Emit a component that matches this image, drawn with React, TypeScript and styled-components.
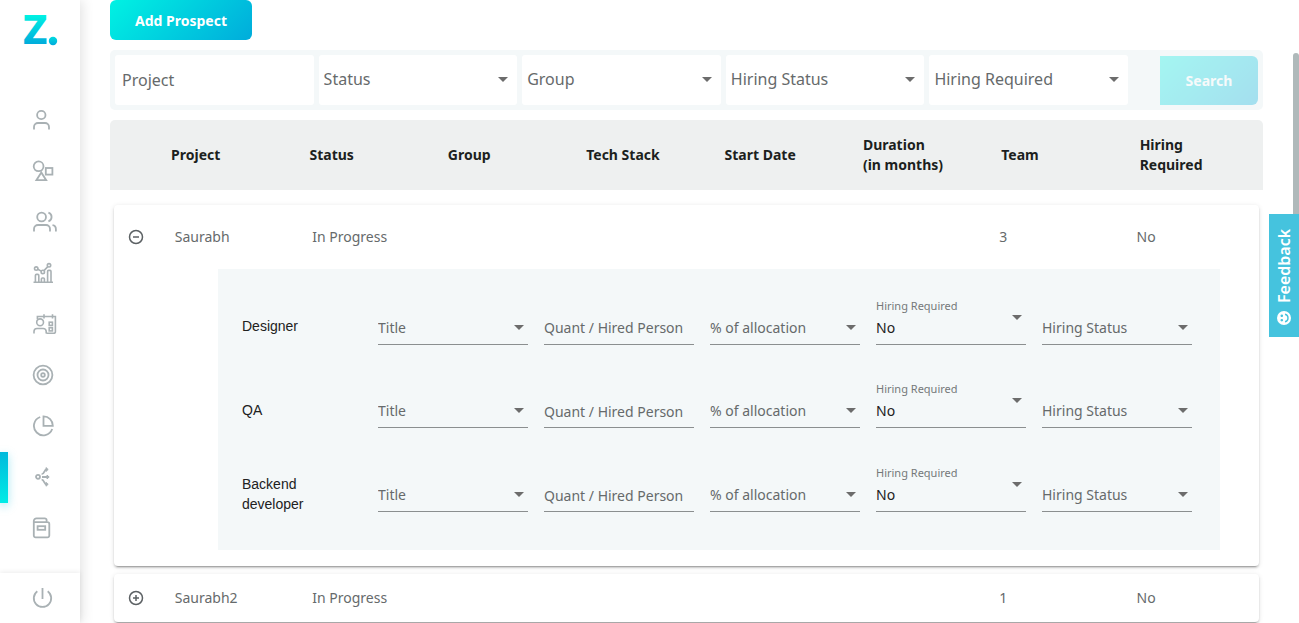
import React from "react";
import styled, { createGlobalStyle, css } from "styled-components";

const GlobalStyle = createGlobalStyle`
  *, *::before, *::after { box-sizing: border-box; }
  body {
    margin: 0;
    background: #fff;
    color: #212121;
    font-family: "Noto Sans", sans-serif;
    font-size: 14px;
    line-height: 20px;
  }
  button, input, select { font: inherit; }
`;

/* ---------- shell ---------- */

const Shell = styled.div`
  display: flex;
  height: 100vh;
  overflow: hidden;
`;

const Main = styled.main`
  flex: 1;
  min-width: 0;
  padding: 0 36px 0 30px;
`;

/* ---------- sidebar ---------- */

const Sidebar = styled.aside`
  display: flex;
  flex-direction: column;
  flex: 0 0 80px;
  background: #fff;
  box-shadow: 2px 0 12px rgba(0, 0, 0, 0.12);
`;

const LogoLink = styled.a`
  display: block;
  flex: 0 0 95px;
  padding-left: 22px;
`;

const NavList = styled.ul`
  list-style: none;
  margin: 0;
  padding: 0;
`;

const NavItem = styled.li<{ $active?: boolean }>`
  display: flex;
  height: 51px;

  &::before {
    content: "";
    width: 8px;
    ${(p) =>
      p.$active &&
      css`
        background: linear-gradient(#00b9dc, #00ece6);
        box-shadow: 0 3px 10px rgba(0, 190, 222, 0.35);
      `}
  }
`;

const NavLink = styled.a`
  display: flex;
  flex: 1;
  align-items: center;
  padding: 0 0 2px 24px;
  color: #a9b1b4;
`;

const SidebarFooter = styled.div`
  display: flex;
  margin-top: auto;
  height: 50px;
  box-shadow: 0 -1px 5px rgba(0, 0, 0, 0.08);
`;

const PowerButton = styled.button`
  display: flex;
  flex: 1;
  align-items: center;
  padding: 0 0 0 32px;
  border: 0;
  background: none;
  color: #a9b1b4;
`;

/* ---------- buttons ---------- */

const GradientButton = styled.button`
  border: 0;
  padding: 0 25px;
  border-radius: 6px;
  background: linear-gradient(135deg, #00f2e3, #00acdb);
  color: #fff;
  font-weight: 700;
`;

const AddButton = styled(GradientButton)`
  display: block;
  height: 40px;
  padding-top: 2px;
`;

const SearchButton = styled(GradientButton)`
  width: 98px;
  height: 49px;
  border-radius: 0 6px 6px 0;
  opacity: 0.32;
`;

/* ---------- filter bar ---------- */

const FilterBar = styled.form`
  display: flex;
  align-items: flex-end;
  gap: 32px;
  margin-top: 10px;
  padding: 5px;
  border-radius: 5px;
  background: #f4f8f9;
`;

const FilterFields = styled.div`
  display: grid;
  grid-template-columns: repeat(5, minmax(0, 1fr));
  gap: 5px;
  flex: 1;
`;

const FilterBox = styled.label`
  display: grid;
  align-items: center;
  height: 50px;
  border-radius: 3px;
  background: #fff;
  font-size: 16px;
`;

const controlReset = css`
  grid-area: 1 / 1;
  width: 100%;
  min-width: 0;
  border: 0;
  border-radius: 0;
  outline: 0;
  background: none;
  appearance: none;
  color: #666a6b;
  &::placeholder {
    color: #666a6b;
    opacity: 1;
  }
`;

const FilterInput = styled.input`
  ${controlReset}
  height: 50px;
  padding: 0 7px;
`;

const FilterSelect = styled.select`
  ${controlReset}
  height: 50px;
  padding: 0 24px 2px 5px;
`;

const Caret = styled.svg`
  grid-area: 1 / 1;
  justify-self: end;
  margin: 0 9px 2px 0;
  pointer-events: none;
`;

const CaretShape = () => <path d="M0 0h10l-5 5z" fill="#6c6c6c" />;

/* ---------- prospects table ---------- */

const Table = styled.table`
  display: block;
  margin-top: 10px;
`;

const TableHead = styled.thead`
  display: block;
  margin-bottom: 15px;
`;

const HeadRow = styled.tr`
  display: grid;
  grid-template-columns: 4% repeat(8, 12%);
  align-items: center;
  min-height: 70px;
  border-radius: 5px 5px 0 0;
  background: #eef0f0;
`;

const HeadCell = styled.th`
  padding: 0 15px;
  text-align: left;
  font-weight: 700;
  color: #1c1f20;
`;

const Card = styled.tbody`
  display: block;
  margin: 0 4px 8px;
  border-radius: 4px;
  background: #fff;
  box-shadow: 0 3px 1px -2px rgba(0, 0, 0, 0.2),
    0 2px 2px 0 rgba(0, 0, 0, 0.14), 0 1px 5px 0 rgba(0, 0, 0, 0.12);
`;

const CardRow = styled.tr<{ $open?: boolean }>`
  display: grid;
  grid-template-columns: 4% repeat(8, 12%);
  align-items: center;
  height: ${(p) => (p.$open ? "64px" : "48px")};
`;

const Cell = styled.td`
  padding: 0 15px;
  color: #666a6b;
`;

const ToggleCell = styled.td`
  padding: 0 0 0 14px;
`;

const ToggleButton = styled.button`
  display: block;
  width: 16px;
  height: 16px;
  padding: 0;
  border: 0;
  background: none;
  color: #5c6164;
`;

const DetailRow = styled.tr`
  display: block;
`;

const DetailCell = styled.td`
  display: block;
  padding: 0 39px 16px 104px;
`;

const Panel = styled.div`
  display: grid;
  grid-auto-rows: 1fr;
  min-height: 281px;
  padding: 15px 28px 15px 24px;
  background: #f4f8f9;
`;

const RoleRow = styled.div`
  display: grid;
  grid-template-columns: 120px repeat(5, minmax(0, 1fr));
  gap: 16px;
  align-items: center;
`;

const RoleName = styled.span`
  padding: 1px 24px 0 0;
  font-family: "Liberation Sans", sans-serif;
`;

const Field = styled.label`
  display: grid;
  grid-template-rows: 16px 30px;
  padding-bottom: 10px;
`;

const FieldLabel = styled.span`
  grid-area: 1 / 1;
  font-size: 11px;
  line-height: 16px;
  color: #757879;
`;

const fieldControl = css`
  ${controlReset}
  grid-area: 2 / 1;
  height: 31px;
  padding: 0 0 2px;
  border-bottom: 1px solid #8b8f90;
`;

const FieldInput = styled.input`
  ${fieldControl}
`;

const FieldSelect = styled.select<{ $filled?: boolean }>`
  ${fieldControl}
  ${(p) => p.$filled && "color: #212121;"}
`;

const FieldCaret = styled(Caret)<{ $raised?: boolean }>`
  grid-area: 1 / 1 / 3 / 2;
  align-self: start;
  margin: ${(p) => (p.$raised ? "17px" : "27px")} 4px 0 0;
`;

/* ---------- floating parts ---------- */

const ScrollThumb = styled.div`
  position: fixed;
  top: 53px;
  right: 0;
  width: 6px;
  height: 200px;
  border-radius: 3px;
  background: #afb9ba;
`;

const FeedbackTab = styled.button`
  position: fixed;
  top: 214px;
  right: 0;
  display: flex;
  align-items: center;
  gap: 8px;
  width: 30px;
  height: 123px;
  padding: 12px 0;
  border: 0;
  background: #45c3de;
  color: #fff;
  font-size: 16px;
  font-weight: 600;
  writing-mode: vertical-rl;
  transform: rotate(180deg);
`;

/* ---------- icons ---------- */

const iconPaths: Record<string, React.ReactNode> = {
  Profile: (
    <>
      <circle cx="9.3" cy="6" r="4.2" />
      <path d="M2 20.5V18a4 4 0 0 1 4-4h7a4 4 0 0 1 4 4v2.5" />
    </>
  ),
  Skills: (
    <>
      <circle cx="6.6" cy="6.3" r="4.9" />
      <rect x="13.8" y="8" width="6.6" height="6.6" />
      <path d="M9.3 12.5 4.4 20.2h9.8z" />
    </>
  ),
  Teams: (
    <>
      <circle cx="9.6" cy="6" r="4.4" />
      <path d="M2 20.5V18a4 4 0 0 1 4-4h8a4 4 0 0 1 4 4v2.5" />
      <path d="M16.4 1.7a4.5 4.5 0 0 1 0 8.6M20.5 14.2a4 4 0 0 1 3.4 4v2.3" />
    </>
  ),
  Reports: (
    <g strokeWidth="1.6">
      <path d="M1.5 20.3H21M3.4 20v-6.6a1 1 0 0 1 1-1h1.4a1 1 0 0 1 1 1V20M9.4 20v-3a1 1 0 0 1 1-1h1a1 1 0 0 1 1 1v3M15.6 20V9.4a1 1 0 0 1 1-1h1.4a1 1 0 0 1 1 1V20" />
      <circle cx="4.2" cy="6.6" r="1.7" />
      <circle cx="10.8" cy="9.9" r="1.7" />
      <circle cx="17" cy="3.3" r="1.7" />
      <path d="m5.8 7.300 3.500 1.800M12 8.600l3.800-4" />
    </g>
  ),
  Calendar: (
    <g strokeWidth="1.6">
      <circle cx="8.1" cy="9.3" r="3.4" />
      <path d="M2 20.5v-2a3 3 0 0 1 3-3h6.200a3 3 0 0 1 3 3v2" />
      <path d="M5.400 6.200V3.500h18v15.300a1.500 1.500 0 0 1-1.500 1.500h-7.500M12 1.200v4.200M20.500 1.200v4.200" />
      <rect x="17.2" y="9.2" width="3.2" height="3.2" />
      <rect x="17.2" y="14.7" width="3.2" height="3.2" />
    </g>
  ),
  Goals: (
    <>
      <circle cx="11" cy="11" r="9.4" />
      <circle cx="11" cy="11" r="5.5" />
      <circle cx="11" cy="11" r="1.8" />
    </>
  ),
  Analytics: (
    <>
      <path d="M8.200 2A9.400 9.400 0 1 0 20.200 14" />
      <path d="M11.500 1.400v9.400h9.300a9.300 9.300 0 0 0-9.300-9.400z" />
    </>
  ),
  Prospects: (
    <>
      <circle cx="6" cy="10.8" r="2" />
      <path d="M10 11h5M9.600 8.200c3 0 2.200-4.700 5-4.700M9.600 13.600c3 0 2.200 4.700 5 4.700" />
      <path
        fill="currentColor"
        strokeWidth="1"
        d="m14 1.600 2.200 1.900L14 5.400zM15 9.100l2.200 1.900L15 12.900zM14 16.400l2.200 1.900-2.200 1.900z"
      />
    </>
  ),
  Journal: (
    <>
      <path d="M1.800 5.200h13.700a1.800 1.800 0 0 1 1.800 1.800v11.500a1.800 1.800 0 0 1-1.800 1.800h-11.900a1.800 1.800 0 0 1-1.800-1.800v-14.500a2.700 2.700 0 0 1 2.700-2.700h8.300a1.800 1.800 0 0 1 1.800 1.800v2.100" />
      <rect x="5.6" y="9.2" width="7.6" height="3.6" />
    </>
  ),
  Power: <path d="M10.500 1v11M5.300 4.300a8.700 8.700 0 1 0 10.400 0" />,
};

const Icon = ({ name }: { name: string }) => (
  <svg
    width="26"
    height="22"
    viewBox="0 0 26 22"
    fill="none"
    stroke="currentColor"
    strokeWidth="1.8"
    aria-hidden="true"
  >
    {iconPaths[name]}
  </svg>
);

const Logo = () => (
  <svg width="40" height="60" viewBox="0 0 40 60" role="img" aria-label="Z.">
    <defs>
      <linearGradient id="logo" gradientUnits="userSpaceOnUse" x1="0" y1="15" x2="0" y2="45">
        <stop offset="0" stopColor="#00f2e3" />
        <stop offset="1" stopColor="#00a9db" />
      </linearGradient>
      <linearGradient id="dot" x1="0" y1="0" x2="0" y2="1">
        <stop offset="0" stopColor="#00dbe0" />
        <stop offset="1" stopColor="#00a9db" />
      </linearGradient>
    </defs>
    <text
      x="1"
      y="44"
      fontFamily="Noto Sans, sans-serif"
      fontSize="41"
      fontWeight="800"
      fill="url(#logo)"
    >
      Z
    </text>
    <circle cx="31" cy="41" r="4.2" fill="url(#dot)" />
  </svg>
);

const Toggle = ({ open }: { open: boolean }) => (
  <ToggleButton type="button" aria-expanded={open} aria-label={open ? "Collapse" : "Expand"}>
    <svg
      width="16"
      height="16"
      viewBox="0 0 16 16"
      fill="none"
      stroke="currentColor"
      strokeWidth="1.5"
    >
      <circle cx="8" cy="8" r="6.5" />
      <path d={open ? "M5 8h6" : "M5 8h6M8 5v6"} />
    </svg>
  </ToggleButton>
);

/* ---------- data ---------- */

const navItems = [
  "Profile",
  "Skills",
  "Teams",
  "Reports",
  "Calendar",
  "Goals",
  "Analytics",
  "Prospects",
  "Journal",
];
const filters = ["Status", "Group", "Hiring Status", "Hiring Required"];
const columns = [
  "Project",
  "Status",
  "Group",
  "Tech Stack",
  "Start Date",
  "Duration (in\u00a0months)",
  "Team",
  "Hiring Required",
];
const roles = ["Designer", "QA", "Backend developer"];
const prospects = [
  { cells: ["Saurabh", "In Progress", "", "", "", "", "3", "No"], roles },
  { cells: ["Saurabh2", "In Progress", "", "", "", "", "1", "No"], roles: [] },
];

/* ---------- composed parts ---------- */

const PickField = ({ text, label }: { text: string; label?: string }) => (
  <Field>
    {label && <FieldLabel>{label}</FieldLabel>}
    <FieldSelect $filled={!!label} aria-label={label ?? text}>
      <option>{text}</option>
    </FieldSelect>
    <FieldCaret $raised={!!label} width="10" height="5" viewBox="0 0 10 5">
      <CaretShape />
    </FieldCaret>
  </Field>
);

const Role = ({ name }: { name: string }) => (
  <RoleRow>
    <RoleName>{name}</RoleName>
    <PickField text="Title" />
    <Field>
      <FieldInput placeholder="Quant / Hired Person" aria-label="Quant / Hired Person" />
    </Field>
    <PickField text="% of allocation" />
    <PickField text="No" label="Hiring Required" />
    <PickField text="Hiring Status" />
  </RoleRow>
);

export default function App() {
  return (
    <>
      <GlobalStyle />
      <Shell>
        <Sidebar>
          <LogoLink href="#home">
            <Logo />
          </LogoLink>
          <nav>
            <NavList>
              {navItems.map((name) => (
                <NavItem key={name} $active={name === "Prospects"}>
                  <NavLink href={`#${name.toLowerCase()}`} aria-label={name}>
                    <Icon name={name} />
                  </NavLink>
                </NavItem>
              ))}
            </NavList>
          </nav>
          <SidebarFooter>
            <PowerButton type="button" aria-label="Log out">
              <Icon name="Power" />
            </PowerButton>
          </SidebarFooter>
        </Sidebar>

        <Main>
          <AddButton type="button">Add Prospect</AddButton>

          <FilterBar>
            <FilterFields>
              <FilterBox>
                <FilterInput placeholder="Project" aria-label="Project" />
              </FilterBox>
              {filters.map((name) => (
                <FilterBox key={name}>
                  <FilterSelect aria-label={name}>
                    <option>{name}</option>
                  </FilterSelect>
                  <Caret width="10" height="5" viewBox="0 0 10 5">
                    <CaretShape />
                  </Caret>
                </FilterBox>
              ))}
            </FilterFields>
            <SearchButton type="button">Search</SearchButton>
          </FilterBar>

          <Table>
            <TableHead>
              <HeadRow>
                <td />
                {columns.map((name) => (
                  <HeadCell key={name} scope="col">
                    {name}
                  </HeadCell>
                ))}
              </HeadRow>
            </TableHead>
            {prospects.map((prospect) => {
              const open = prospect.roles.length > 0;
              return (
                <Card key={prospect.cells[0]}>
                  <CardRow $open={open}>
                    <ToggleCell>
                      <Toggle open={open} />
                    </ToggleCell>
                    {prospect.cells.map((text, i) => (
                      <Cell key={columns[i]}>{text}</Cell>
                    ))}
                  </CardRow>
                  {open && (
                    <DetailRow>
                      <DetailCell>
                        <Panel>
                          {prospect.roles.map((role) => (
                            <Role key={role} name={role} />
                          ))}
                        </Panel>
                      </DetailCell>
                    </DetailRow>
                  )}
                </Card>
              );
            })}
          </Table>
        </Main>
      </Shell>
      <ScrollThumb />
      <FeedbackTab type="button">
        <svg width="14" height="14" viewBox="0 0 14 14" aria-hidden="true">
          <circle cx="7" cy="7" r="7" fill="#fff" />
          <g transform="rotate(90 7 7)" fill="none" stroke="#45c3de" strokeWidth="1.4">
            <path d="M3.200 8a3.900 3.900 0 0 0 7.600 0" />
            <circle cx="4.8" cy="4.8" r="0.6" fill="#45c3de" />
            <circle cx="9.2" cy="4.8" r="0.6" fill="#45c3de" />
          </g>
        </svg>
        Feedback
      </FeedbackTab>
    </>
  );
}
